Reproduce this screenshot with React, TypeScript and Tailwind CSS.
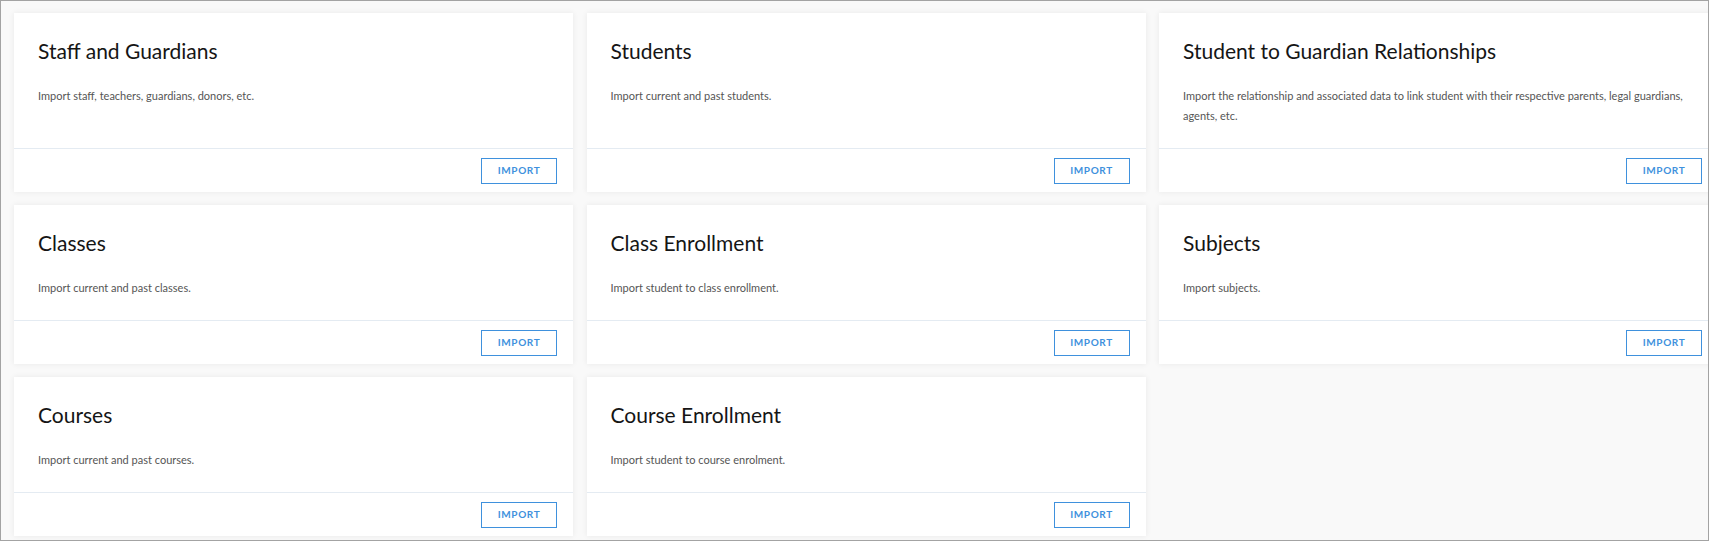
const items = [
  { title: 'Staff and Guardians', text: 'Import staff, teachers, guardians, donors, etc.' },
  { title: 'Students', text: 'Import current and past students.' },
  {
    title: 'Student to Guardian Relationships',
    text: 'Import the relationship and associated data to link student with their respective parents, legal guardians, agents, etc.',
  },
  { title: 'Classes', text: 'Import current and past classes.' },
  { title: 'Class Enrollment', text: 'Import student to class enrollment.' },
  { title: 'Subjects', text: 'Import subjects.' },
  { title: 'Courses', text: 'Import current and past courses.' },
  { title: 'Course Enrollment', text: 'Import student to course enrolment.' },
];

function ImportCard({ title, text }: { title: string; text: string }) {
  return (
    <div className="flex flex-col bg-white shadow-[0_0_6px_rgba(0,0,0,0.07)]">
      <div className="flex-1 px-6 pt-6 pb-[22px]">
        <h2 className="text-[21px] leading-7 text-[#151515]">{title}</h2>
        <p className="mt-[21px] text-[11px] leading-5 text-[#555]">{text}</p>
      </div>
      <div className="flex h-[44px] items-center justify-end border-t border-[#e4ebf2] pr-4">
        <button className="h-[26px] w-[76px] border border-[#3f91dd] text-[10px] font-bold tracking-[0.06em] text-[#3f91dd]">
          IMPORT
        </button>
      </div>
    </div>
  );
}

export default function App() {
  return (
    <div
      className="h-[541px] w-[1709px] overflow-hidden border border-[#a3a3a3] bg-[#f9f9f9] pt-3 pl-[13px]"
      style={{ fontFamily: 'Lato, "Open Sans", sans-serif' }}
    >
      <div className="grid grid-cols-[repeat(3,559px)] gap-x-[13.5px] gap-y-[13px]">
        {items.map((item) => (
          <ImportCard key={item.title} {...item} />
        ))}
      </div>
    </div>
  );
}
